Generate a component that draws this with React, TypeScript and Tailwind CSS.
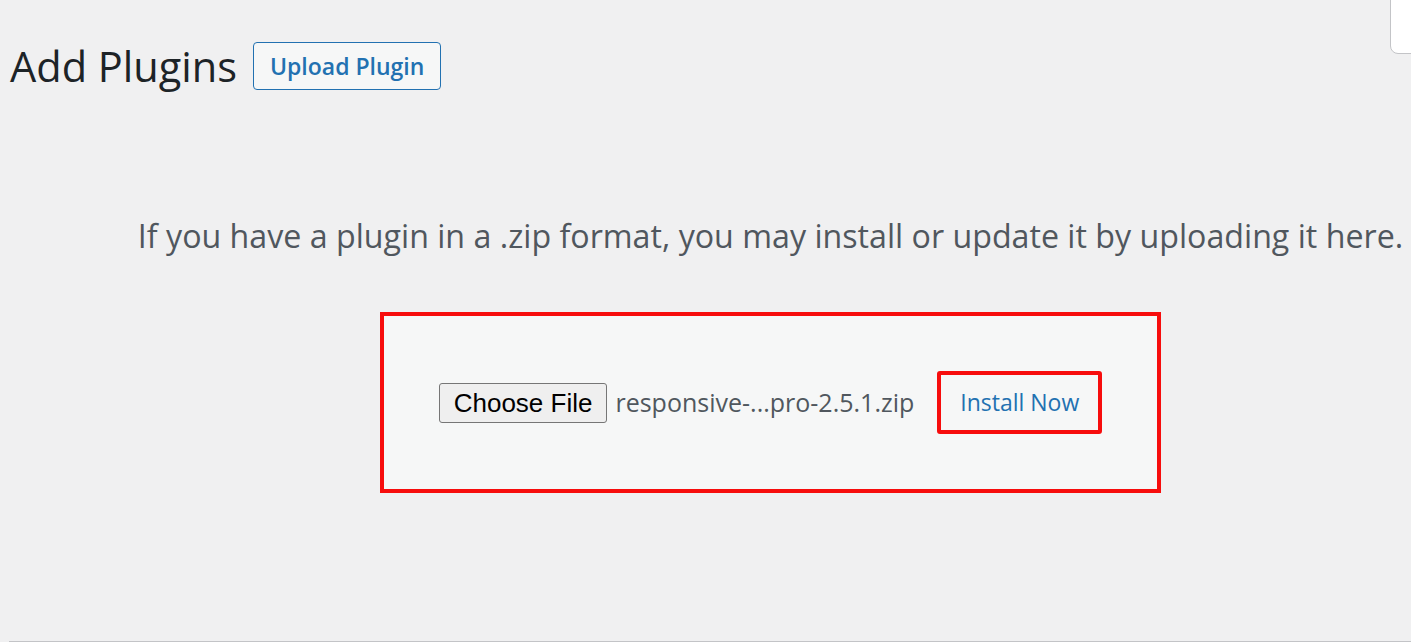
import React from "react";

const sans = "font-['Open_Sans','Noto_Sans',sans-serif]";

export default function App() {
  return (
    <div className={`relative min-h-[642px] w-full overflow-hidden bg-[#f0f0f1] ${sans}`}>
      {/* screen options tab peeking in top-right */}
      <div className="absolute right-[-10px] top-[-4px] h-[58px] w-[31px] rounded-bl-[8px] border border-[#c3c4c7] bg-white" />

      <div className="flex items-center gap-[16px] pl-[10px] pt-[42px]">
        <h1 className="text-[41.5px] font-normal leading-[48px] text-[#1d2327]">Add Plugins</h1>
        <button className="h-[48px] rounded-[4px] border border-[#2271b1] bg-[#f6f7f7] px-[16px] text-[23px] font-semibold text-[#2271b1]">
          Upload Plugin
        </button>
      </div>

      <div className="flex flex-col items-center pl-[130px] pt-[126px]">
        <p className="whitespace-nowrap text-[32.2px] leading-[40px] text-[#50575e]">
          If you have a plugin in a .zip format, you may install or update it by uploading it here.
        </p>

        <div className="mt-[56px] flex h-[181px] w-[781px] items-center justify-center border-[4px] border-[#f70d0d] bg-[#f6f7f7]">
          <button className="h-[40px] rounded-[3px] border border-[#767676] bg-[#efefef] px-[14px] font-['Liberation_Sans',Arial,sans-serif] text-[26px] leading-none text-black">
            Choose File
          </button>
          <span className="ml-[8px] text-[25px] text-[#50575e]">responsive-...pro-2.5.1.zip</span>
          <div className="ml-[23px] flex h-[63px] w-[165px] items-center justify-center rounded-[3px] border-[4px] border-[#f70d0d]">
            <span className="text-[23px] text-[#2271b1]">Install Now</span>
          </div>
        </div>
      </div>

      <div className="absolute bottom-0 left-[9px] right-0 h-px bg-[#c3c4c7]" />
    </div>
  );
}
